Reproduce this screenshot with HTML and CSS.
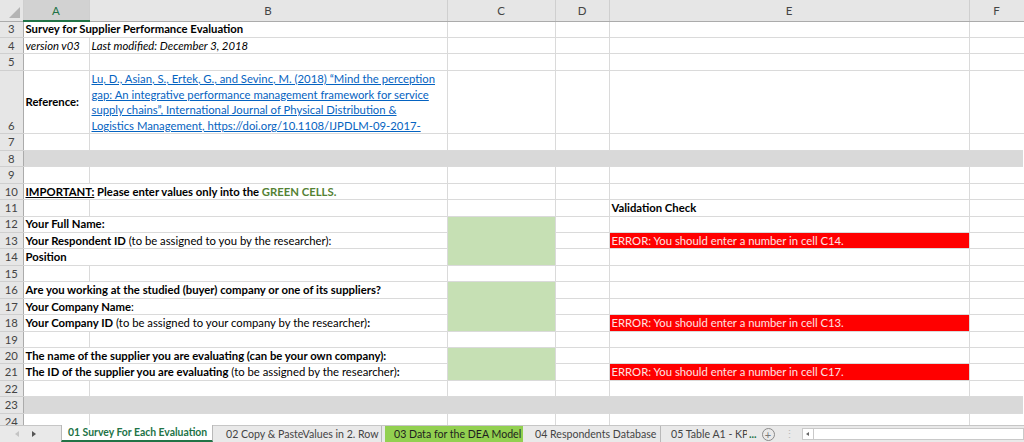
FILE: index.html
```html
<!DOCTYPE html>
<html lang="en">
<head>
<meta charset="UTF-8">
<title>Survey for Supplier Performance Evaluation</title>
<link rel="stylesheet" href="styles.css">
</head>
<body>
<div class="sheet">
  <table class="grid">
    <colgroup>
      <col class="c-rh"><col class="c-a"><col class="c-b"><col class="c-c"><col class="c-d"><col class="c-e"><col class="c-f">
    </colgroup>
    <thead>
      <tr>
        <th class="corner"><span class="tri"></span></th>
        <th class="sel">A</th><th>B</th><th>C</th><th>D</th><th>E</th><th>F</th>
      </tr>
    </thead>
    <tbody>
      <tr><td class="rh">3</td><td colspan="2" class="b">Survey for Supplier Performance Evaluation</td><td></td><td></td><td></td><td></td></tr>
      <tr><td class="rh">4</td><td class="i">version v03</td><td class="i">Last modified: December 3, 2018</td><td></td><td></td><td></td><td></td></tr>
      <tr><td class="rh">5</td><td></td><td></td><td></td><td></td><td></td><td></td></tr>
      <tr class="tall">
        <td class="rh">6</td>
        <td class="b mid">Reference:</td>
        <td class="ref"><a href="#">Lu, D., Asian, S., Ertek, G., and Sevinc, M. (2018) “Mind the perception gap: An integrative performance management framework for service supply chains”, International Journal of Physical Distribution &amp; Logistics Management, https://doi.org/10.1108/IJPDLM-09-2017-</a></td>
        <td></td><td></td><td></td><td></td>
      </tr>
      <tr><td class="rh">7</td><td></td><td></td><td></td><td></td><td></td><td></td></tr>
      <tr><td class="rh">8</td><td colspan="6" class="band"></td></tr>
      <tr><td class="rh">9</td><td></td><td></td><td></td><td></td><td></td><td></td></tr>
      <tr><td class="rh">10</td><td colspan="2" class="b"><u>IMPORTANT:</u> Please enter values only into the <span class="green-txt">GREEN CELLS.</span></td><td></td><td></td><td></td><td></td></tr>
      <tr><td class="rh">11</td><td></td><td></td><td></td><td></td><td class="b">Validation Check</td><td></td></tr>
      <tr><td class="rh">12</td><td colspan="2" class="b">Your Full Name:</td><td rowspan="3" class="input"></td><td></td><td></td><td></td></tr>
      <tr><td class="rh">13</td><td colspan="2"><b>Your Respondent ID</b> (to be assigned to you by the researcher):</td><td></td><td class="err">ERROR: You should enter a number in cell C14.</td><td></td></tr>
      <tr><td class="rh">14</td><td colspan="2" class="b">Position</td><td></td><td></td><td></td></tr>
      <tr><td class="rh">15</td><td></td><td></td><td></td><td></td><td></td><td></td></tr>
      <tr><td class="rh">16</td><td colspan="2" class="b">Are you working at the studied (buyer) company or one of its suppliers?</td><td rowspan="3" class="input"></td><td></td><td></td><td></td></tr>
      <tr><td class="rh">17</td><td colspan="2"><b>Your Company Name</b>:</td><td></td><td></td><td></td></tr>
      <tr><td class="rh">18</td><td colspan="2"><b>Your Company ID</b> (to be assigned to your company by the researcher)<b>:</b></td><td></td><td class="err">ERROR: You should enter a number in cell C13.</td><td></td></tr>
      <tr><td class="rh">19</td><td></td><td></td><td></td><td></td><td></td><td></td></tr>
      <tr><td class="rh">20</td><td colspan="2" class="b">The name of the supplier you are evaluating (can be your own company):</td><td rowspan="2" class="input"></td><td></td><td></td><td></td></tr>
      <tr><td class="rh">21</td><td colspan="2"><b>The ID of the supplier you are evaluating</b> (to be assigned by the researcher)<b>:</b></td><td></td><td class="err">ERROR: You should enter a number in cell C17.</td><td></td></tr>
      <tr><td class="rh">22</td><td></td><td></td><td></td><td></td><td></td><td></td></tr>
      <tr><td class="rh">23</td><td colspan="6" class="band"></td></tr>
      <tr><td class="rh">24</td><td></td><td></td><td></td><td></td><td></td><td></td></tr>
    </tbody>
  </table>
</div>

<div class="tabbar">
  <div class="nav">
    <span class="arrow left off"></span>
    <span class="arrow right"></span>
  </div>
  <div class="tab active">01 Survey For Each Evaluation</div>
  <div class="tab t2">02 Copy &amp; PasteValues in 2. Row</div>
  <div class="tab lime">03 Data for the DEA Model</div>
  <div class="tab t4">04 Respondents Database</div>
  <div class="tab last">05 Table A1 - KP</div>
  <span class="more">...</span>
  <span class="add">+</span>
  <span class="dots">⋮</span>
  <div class="hscroll">
    <span class="sbtn"><span class="arrow left small"></span></span>
    <span class="track"></span>
  </div>
</div>
</body>
</html>
```

FILE: styles.css
```css
body { margin: 0; font-family: Lato, "Open Sans", sans-serif; font-size: 11.3px; color: #000; background: #fff; overflow: hidden; }

.sheet { height: 425px; overflow: hidden; }
.grid { border-collapse: collapse; table-layout: fixed; width: 1024px; }
.c-rh { width: 23px; }
.c-a { width: 66px; }
.c-b { width: 358px; }
.c-c { width: 108px; }
.c-d { width: 54px; }
.c-e { width: 360px; }
.c-f { width: 55px; }

.grid th { height: 20px; background: #e6e6e6; color: #444; font-weight: normal; font-size: 11.5px; border-right: 1px solid #cfcfcf; border-bottom: 1px solid #ababab; padding: 0; }
.grid th.sel { background: #d2d2d2; color: #217346; border-bottom: 2px solid #217346; }
.grid th.corner { position: relative; }
.tri { position: absolute; right: 3px; bottom: 3px; width: 0; height: 0; border-left: 11px solid transparent; border-bottom: 11px solid #b4b4b4; }

.grid td { height: 16.45px; padding: 0 2px; border-right: 1px solid #dadada; border-bottom: 1px solid #dadada; white-space: nowrap; vertical-align: bottom; line-height: 14.5px; box-sizing: border-box; }
.grid td.rh { background: #e6e6e6; color: #444; text-align: center; border-right: 1px solid #ababab; border-bottom: 1px solid #cfcfcf; padding: 0; }
.grid tr.tall td { height: 63.5px; }

.b { font-weight: bold; }
.i { font-style: italic; }
.grid td.mid { vertical-align: middle; }
.grid td.ref { white-space: normal; line-height: 15.6px; vertical-align: bottom; padding: 0 10px 0 2px; }
.ref a { color: #0563c1; }

.green-txt { color: #548235; }
.grid td.band { background: #d9d9d9; border-right: 3px solid #fff; }
.grid td.input { background: #c6e0b4; border-bottom-color: #dadada; }
.grid td.err { background: #ff0000; color: #fde3e3; }

.tabbar { height: 16px; display: flex; align-items: stretch; background: #e9e9e9; border-top: 1px solid #c6c6c6; font-size: 10.6px; color: #444; }
.nav { width: 61px; flex: none; display: flex; align-items: center; gap: 13px; padding-left: 15px; box-sizing: border-box; }
.arrow { width: 0; height: 0; border-top: 3px solid transparent; border-bottom: 3px solid transparent; }
.arrow.left { border-right: 4px solid #666; }
.arrow.right { border-left: 4px solid #555; }
.arrow.off { border-right-color: #c4c4c4; }
.tab { flex: none; box-sizing: border-box; display: flex; align-items: center; border-right: 1px solid #b9b9b9; white-space: nowrap; overflow: hidden; line-height: 15px; }
.tab.active { width: 152px; background: #fff; color: #217346; font-weight: bold; border-left: 1px solid #b9b9b9; border-bottom: 2px solid #217346; margin-top: -1px; padding-left: 6px; font-size: 10.4px; }
.tab.t2 { width: 169px; padding-left: 13px; }
.tab.lime { width: 138px; margin-left: 3px; background: #92d050; color: #1e1e1e; padding-left: 9px; border-right: none; }
.tab.t4 { width: 138px; padding-left: 12px; }
.tab.last { width: 86px; padding-left: 10px; border-right: none; }
.more { color: #217346; display: flex; align-items: center; padding: 0 5px 0 2px; font-weight: bold; }
.add { flex: none; display: flex; align-items: center; justify-content: center; width: 11px; height: 11px; margin-top: 2px; border: 1px solid #8a8a8a; border-radius: 50%; color: #777; font-size: 11px; line-height: 11px; }
.dots { color: #bbb; padding: 0 7px 0 9px; display: flex; align-items: center; }
.hscroll { flex: 1; display: flex; align-items: stretch; padding: 2px 0 2px; }
.sbtn { width: 10px; display: flex; align-items: center; justify-content: center; border: 1px solid #c9c9c9; background: #fff; }
.arrow.small { border-top-width: 2px; border-bottom-width: 2px; border-right-width: 3px; }
.track { flex: 1; background: #fff; border: 1px solid #c9c9c9; border-left: none; }
```
